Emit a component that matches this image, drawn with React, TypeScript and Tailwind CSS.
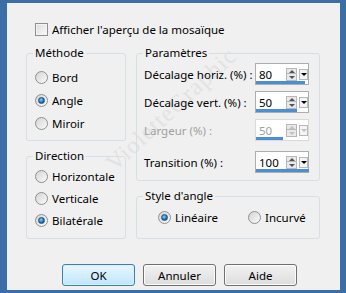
const font = { fontFamily: '"Noto Sans", "Open Sans", sans-serif' };

const Radio = ({ checked, label }: { checked?: boolean; label: string }) => (
  <div className="flex h-4 items-center gap-[4px]">
    <span className="flex h-[13px] w-[13px] items-center justify-center rounded-full border border-[#8e8f8f] bg-gradient-to-br from-[#d4d4d4] to-[#fbfbfb]">
      {checked ? (
        <span className="h-[7px] w-[7px] rounded-full border border-[#1d4f7c] bg-[radial-gradient(circle_at_40%_35%,#8fd0f5,#1e6fb3_60%,#0f3f6e)]" />
      ) : null}
    </span>
    <span className="whitespace-nowrap">{label}</span>
  </div>
);

const Group = ({ title, className, children }: { title: string; className?: string; children: React.ReactNode }) => (
  <fieldset className={`rounded-[3px] border border-[#d5dfe5] ${className ?? ""}`}>
    <legend className="ml-[6px] px-[2px] leading-4">{title}</legend>
    {children}
  </fieldset>
);

const Spinner = ({ value, bar, disabled }: { value: string; bar: number; disabled?: boolean }) => (
  <div
    className={`relative flex h-[22px] w-[54px] shrink-0 items-center border bg-white pl-[3px] ${
      disabled ? "border-[#d9d9d9] text-[#a0a0a0]" : "border-[#abadb3] text-black"
    }`}
  >
    <span className="w-[28px]">{value}</span>
    <span className="flex h-[13px] w-[11px] flex-col border border-[#b8b8b8] bg-[#e9e9e9]">
      <span className="flex h-1/2 items-center justify-center border-b border-[#b8b8b8]">
        <span className={`h-0 w-0 border-x-[3px] border-b-[3px] border-x-transparent ${disabled ? "border-b-[#c0c0c0]" : "border-b-[#555]"}`} />
      </span>
      <span className="flex h-1/2 items-center justify-center">
        <span className={`h-0 w-0 border-x-[3px] border-t-[3px] border-x-transparent ${disabled ? "border-t-[#c0c0c0]" : "border-t-[#555]"}`} />
      </span>
    </span>
    <span className="ml-[2px] flex h-[11px] w-[9px] items-center justify-center border border-[#b8b8b8] bg-[#f4f4f4]">
      <span className={`h-0 w-0 border-x-[3px] border-t-[3px] border-x-transparent ${disabled ? "border-t-[#c0c0c0]" : "border-t-black"}`} />
    </span>
    <span className="absolute bottom-0 left-0 h-[3px] bg-[#4a8fd4]" style={{ width: bar }} />
  </div>
);

const Button = ({ label, primary }: { label: string; primary?: boolean }) => (
  <button
    type="button"
    className={`h-[22px] w-[73px] rounded-[3px] border ${
      primary
        ? "border-[#3c7fb1] bg-gradient-to-b from-[#eaf6fd] to-[#bee6fd] shadow-[inset_0_0_0_1px_#d9f0fc]"
        : "border-[#707070] bg-gradient-to-b from-[#f2f2f2] to-[#dddddd] shadow-[inset_0_0_0_1px_#fcfcfc]"
    }`}
  >
    {label}
  </button>
);

export default function App() {
  return (
    <div className="h-[293px] w-[346px] bg-[#3b6ea6] pb-[3px] pl-[7px] pr-[6px] pt-[3px]" style={font}>
      <div className="relative h-full overflow-hidden bg-[#f0f0f0] text-[11.5px] text-black">
        {/* faint watermark across the dialog */}
        <span
          className="pointer-events-none absolute left-[80px] top-[88px] -rotate-[43deg] text-[24px] tracking-[1px] text-[#d6d6d6] opacity-50"
          style={{ fontFamily: '"Liberation Serif", serif' }}
        >
          VioletteGraphic
        </span>

        <div className="relative flex items-center gap-[4px] pl-[28px] pt-[18px]">
          <span className="h-[13px] w-[13px] border border-[#8e8f8f] bg-gradient-to-br from-[#dcdcdc] to-[#fafafa] shadow-[inset_0_0_0_1px_#f4f4f4]" />
          <span>Afficher l'aperçu de la mosaïque</span>
        </div>

        <div className="relative mt-[7px] flex gap-[10px] pl-[19px]">
          <div className="flex w-[100px] flex-col gap-[7px]">
            <Group title="Méthode" className="h-[96px]">
              <div className="flex flex-col gap-[7px] pl-[8px] pt-[8px]">
                <Radio label="Bord" />
                <Radio label="Angle" checked />
                <Radio label="Miroir" />
              </div>
            </Group>
            <Group title="Direction" className="h-[91px]">
              <div className="flex flex-col gap-[6px] pl-[8px] pt-[4px]">
                <Radio label="Horizontale" />
                <Radio label="Verticale" />
                <Radio label="Bilatérale" checked />
              </div>
            </Group>
          </div>

          <div className="flex w-[184px] flex-col gap-[7px]">
            <Group title="Paramètres" className="h-[136px]">
              <div className="flex flex-col whitespace-nowrap pl-[7px] pr-[10px] pt-[2px]">
                <div className="flex h-[22px] items-center justify-between">
                  <span>Décalage horiz. (%) :</span>
                  <Spinner value="80" bar={49} />
                </div>
                <div className="mt-[6px] flex h-[22px] items-center justify-between">
                  <span>Décalage vert. (%) :</span>
                  <Spinner value="50" bar={41} />
                </div>
                <div className="mt-[6px] flex h-[22px] items-center justify-between">
                  <span className="text-[#a0a0a0]">Largeur (%) :</span>
                  <Spinner value="50" bar={27} disabled />
                </div>
                <div className="mt-[10px] flex h-[22px] items-center justify-between">
                  <span>Transition (%) :</span>
                  <Spinner value="100" bar={53} />
                </div>
              </div>
            </Group>
            <Group title="Style d'angle" className="h-[51px]">
              <div className="flex gap-[30px] pl-[21px] pt-[5px]">
                <Radio label="Linéaire" checked />
                <Radio label="Incurvé" />
              </div>
            </Group>
          </div>
        </div>

        <div className="relative mt-[25px] flex gap-[8px] pl-[55px]">
          <Button label="OK" primary />
          <Button label="Annuler" />
          <Button label="Aide" />
        </div>
      </div>
    </div>
  );
}
